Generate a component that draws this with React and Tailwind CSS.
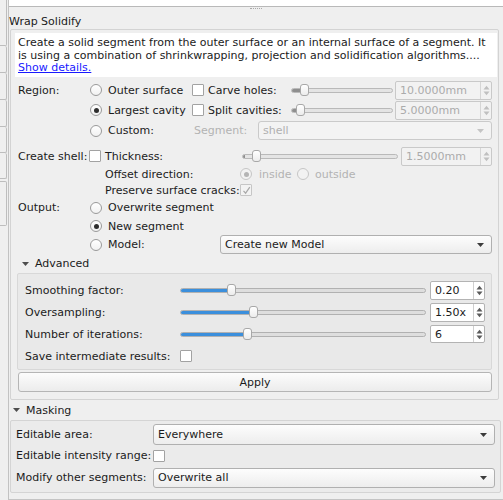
import React from 'react';

const Radio = ({ checked, disabled }) => (
  <span
    className={`w-[12px] h-[12px] rounded-full border shrink-0 flex items-center justify-center ${
      disabled ? 'border-[#c6c6c6] bg-[#f2f2f2]' : 'border-[#9a9a9a] bg-gradient-to-b from-white to-[#f1f1f1]'
    }`}
  >
    {checked && <span className={`w-[5px] h-[5px] rounded-full ${disabled ? 'bg-[#b4b4b4]' : 'bg-[#2e2e2e]'}`} />}
  </span>
);

const Check = ({ checked, disabled }) => (
  <span
    className={`w-[12px] h-[12px] border rounded-[1px] shrink-0 flex items-center justify-center ${
      disabled ? 'border-[#c6c6c6] bg-[#f3f3f3]' : 'border-[#a2a2a2] bg-white'
    }`}
  >
    {checked && (
      <svg width="9" height="9" viewBox="0 0 9 9">
        <path d="M1.5 4.8 L3.6 7.2 L7.8 1.2" fill="none" stroke="#a9a9a9" strokeWidth="1.2" />
      </svg>
    )}
  </span>
);

const Arrows = ({ disabled }) => (
  <svg width="7" height="11" viewBox="0 0 7 11">
    <path d="M0.5 4.5 L3.5 0.8 L6.5 4.5 Z" fill={disabled ? '#c0c0c0' : '#5a5a5a'} />
    <path d="M0.5 6.5 L3.5 10.2 L6.5 6.5 Z" fill={disabled ? '#c0c0c0' : '#5a5a5a'} />
  </svg>
);

const Spin = ({ value, disabled, w, h = 'h-[19px]' }) => (
  <div
    className={`${w} ${h} shrink-0 flex border rounded-[2px] ${
      disabled ? 'border-[#c9c9c9] bg-[#f2f2f2] text-[#ababab]' : 'border-[#b3b3b3] bg-white text-[#1b1b1b]'
    }`}
  >
    <div className="flex-1 flex items-center pl-[4px]">{value}</div>
    <div className={`w-[11px] border-l flex items-center justify-center ${disabled ? 'border-[#d6d6d6]' : 'border-[#cfcfcf]'}`}>
      <Arrows disabled={disabled} />
    </div>
  </div>
);

const Combo = ({ value, disabled, w, h = 'h-[19px]' }) => (
  <div
    className={`${w} ${h} shrink-0 flex items-center border rounded-[3px] pl-[4px] pr-[7px] ${
      disabled
        ? 'border-[#cacaca] bg-[#f3f3f3] text-[#b0b0b0]'
        : 'border-[#b0b0b0] bg-gradient-to-b from-[#fdfdfd] to-[#ededed] text-[#1b1b1b]'
    }`}
  >
    <span className="flex-1">{value}</span>
    <svg width="7" height="4" viewBox="0 0 7 4">
      <path d="M0 0 L7 0 L3.5 4 Z" fill={disabled ? '#c4c4c4' : '#3c3c3c'} />
    </svg>
  </div>
);

const Slider = ({ w, fill, knob, disabled }) => (
  <div className={`${w} h-[14px] shrink-0 relative flex items-center`}>
    <div
      className={`w-full h-[5px] rounded-[3px] border flex ${
        disabled ? 'border-[#b9b9b9] bg-[#e4e4e4]' : 'border-[#b1b1b1] bg-[#dedede]'
      }`}
    >
      <div className={`${fill} h-full rounded-l-[3px] ${disabled ? 'bg-[#8e8e8e]' : 'bg-[#3b8fdc]'}`} />
    </div>
    <div
      className={`absolute ${knob} top-[1px] w-[9px] h-[12px] rounded-[3px] border border-[#a8a8a8] bg-gradient-to-b from-white to-[#ececec]`}
    />
  </div>
);

const Tri = () => (
  <svg width="7" height="4" viewBox="0 0 7 4">
    <path d="M0 0 L7 0 L3.5 4 Z" fill="#4e4e4e" />
  </svg>
);

export default function App() {
  return (
    <div className="w-[503px] h-[500px] overflow-hidden flex bg-[#efefef] text-[11px] leading-[13px] text-[#1b1b1b] font-['DejaVu_Sans',sans-serif]">
      <div className="w-[9px] shrink-0 flex flex-col border-r border-[#c2c2c2]">
        <div className="w-[7px] h-[46px] border-r border-b border-[#bdbdbd] rounded-br-[2px]" />
        <div className="w-[7px] h-[27px] border-r border-b border-[#bdbdbd] rounded-r-[2px]" />
        <div className="w-[7px] h-[27px] border-r border-b border-[#bdbdbd] rounded-r-[2px]" />
        <div className="w-[7px] h-[27px] border-r border-b border-[#bdbdbd] rounded-r-[2px]" />
        <div className="w-[7px] h-[26px] border-r border-b border-[#bdbdbd] rounded-r-[2px]" />
        <div className="w-[7px] h-[26px] border-r border-b border-[#bdbdbd] rounded-r-[2px]" />
        <div className="w-[7px] h-[45px] mt-[2px] border-r border-t border-b border-[#bdbdbd] rounded-r-[2px]" />
      </div>

      <div className="flex-1 flex flex-col">
        <div className="h-[7px] bg-white border-b border-[#b9b9b9]" />
        <div className="h-[6px] flex justify-center pt-[1px]">
          <div className="w-[12px] h-[1px] border-t border-dotted border-[#a9a9a9]" />
        </div>
        <div className="h-[16px] flex items-center pl-[0px]">Wrap Solidify</div>

        <div className="ml-[1px] w-[489px] border border-[#d3d3d3] rounded-[2px] flex flex-col">
          <div className="ml-[4px] mt-[3px] w-[482px] h-[44px] bg-white pt-[4px] pl-[3px] leading-[12.5px]">
            <div>Create a solid segment from the outer surface or an internal surface of a segment. It</div>
            <div>is using a combination of shrinkwrapping, projection and solidification algorithms....</div>
            <div className="text-[#1a1aff] underline">Show details.</div>
          </div>

          <div className="mt-[3px] pl-[7px] flex flex-col">
            <div className="h-[20px] flex items-center">
              <span className="w-[72px] shrink-0">Region:</span>
              <span className="w-[102px] shrink-0 flex items-center gap-[6px]"><Radio />Outer surface</span>
              <span className="w-[99px] shrink-0 flex items-center gap-[4px]"><Check />Carve holes:</span>
              <Slider w="w-[102px]" fill="w-[12px]" knob="left-[9px]" disabled />
              <span className="w-[2px]" />
              <Spin value="10.0000mm" w="w-[97px]" disabled />
            </div>
            <div className="h-[20px] flex items-center">
              <span className="w-[72px] shrink-0" />
              <span className="w-[102px] shrink-0 flex items-center gap-[6px]"><Radio checked />Largest cavity</span>
              <span className="w-[99px] shrink-0 flex items-center gap-[4px]"><Check />Split cavities:</span>
              <Slider w="w-[102px]" fill="w-[7px]" knob="left-[5px]" disabled />
              <span className="w-[2px]" />
              <Spin value="5.0000mm" w="w-[97px]" disabled />
            </div>
            <div className="h-[21px] flex items-center">
              <span className="w-[72px] shrink-0" />
              <span className="w-[102px] shrink-0 flex items-center gap-[6px]"><Radio />Custom:</span>
              <span className="w-[66px] shrink-0 pl-[2px] text-[#b3b3b3]">Segment:</span>
              <Combo value="shell" w="w-[234px]" disabled />
            </div>

            <div className="mt-[5px] h-[20px] flex items-center">
              <span className="w-[71px] shrink-0">Create shell:</span>
              <Check />
              <span className="w-[141px] shrink-0 pl-[4px]">Thickness:</span>
              <Slider w="w-[156px]" fill="w-[2px]" knob="left-[10px]" disabled />
              <span className="w-[3px]" />
              <Spin value="1.5000mm" w="w-[91px]" disabled />
            </div>
            <div className="h-[16px] flex items-center">
              <span className="w-[87px] shrink-0" />
              <span className="w-[135px] shrink-0">Offset direction:</span>
              <span className="w-[57px] shrink-0 flex items-center gap-[7px] text-[#b3b3b3]"><Radio checked disabled />inside</span>
              <span className="flex items-center gap-[6px] text-[#b3b3b3]"><Radio disabled />outside</span>
            </div>
            <div className="h-[16px] flex items-center">
              <span className="w-[87px] shrink-0" />
              <span className="w-[135px] shrink-0">Preserve surface cracks:</span>
              <Check checked disabled />
            </div>

            <div className="h-[19px] flex items-center">
              <span className="w-[72px] shrink-0">Output:</span>
              <span className="flex items-center gap-[6px]"><Radio />Overwrite segment</span>
            </div>
            <div className="h-[18px] flex items-center">
              <span className="w-[72px] shrink-0" />
              <span className="flex items-center gap-[6px]"><Radio checked />New segment</span>
            </div>
            <div className="h-[19px] flex items-center">
              <span className="w-[72px] shrink-0" />
              <span className="w-[130px] shrink-0 flex items-center gap-[6px]"><Radio />Model:</span>
              <Combo value="Create new Model" w="w-[272px]" />
            </div>
          </div>

          <div className="h-[19px] flex items-center pl-[11px] gap-[6px]">
            <Tri />
            <span>Advanced</span>
          </div>

          <div className="ml-[6px] w-[475px] border border-[#d8d8d8] rounded-[2px] bg-[#e9e9e9] pt-[5px] pb-[2px] pl-[7px] flex flex-col">
            <div className="h-[22px] flex items-center">
              <span className="w-[155px] shrink-0">Smoothing factor:</span>
              <Slider w="w-[246px]" fill="w-[50px]" knob="left-[47px]" />
              <span className="w-[4px]" />
              <Spin value="0.20" w="w-[55px]" />
            </div>
            <div className="h-[22px] flex items-center">
              <span className="w-[155px] shrink-0">Oversampling:</span>
              <Slider w="w-[246px]" fill="w-[72px]" knob="left-[69px]" />
              <span className="w-[4px]" />
              <Spin value="1.50x" w="w-[55px]" />
            </div>
            <div className="h-[22px] flex items-center">
              <span className="w-[155px] shrink-0">Number of iterations:</span>
              <Slider w="w-[246px]" fill="w-[66px]" knob="left-[63px]" />
              <span className="w-[4px]" />
              <Spin value="6" w="w-[55px]" h="h-[18px]" />
            </div>
            <div className="h-[22px] flex items-center">
              <span className="w-[155px] shrink-0">Save intermediate results:</span>
              <Check />
            </div>
          </div>

          <div className="ml-[7px] mt-[2px] mb-[7px] w-[474px] h-[20px] border border-[#b5b5b5] rounded-[3px] bg-gradient-to-b from-[#fcfcfc] to-[#ececec] flex items-center justify-center">
            Apply
          </div>
        </div>

        <div className="h-[20px] flex items-center pl-[4px] gap-[6px]">
          <Tri />
          <span>Masking</span>
        </div>

        <div className="ml-[1px] w-[491px] border border-[#d4d4d4] rounded-[2px] bg-[#ebebeb] pt-[3px] pb-[4px] pl-[5px] flex flex-col">
          <div className="h-[21px] flex items-center">
            <span className="w-[137px] shrink-0">Editable area:</span>
            <Combo value="Everywhere" w="w-[342px]" h="h-[21px]" />
          </div>
          <div className="h-[21px] flex items-center">
            <span className="w-[137px] shrink-0">Editable intensity range:</span>
            <Check />
          </div>
          <div className="mt-[1px] h-[21px] flex items-center">
            <span className="w-[137px] shrink-0">Modify other segments:</span>
            <Combo value="Overwrite all" w="w-[342px]" h="h-[20px]" />
          </div>
        </div>
        <div className="mt-[6px] h-[1px] bg-[#c4c4c4]" />
      </div>
    </div>
  );
}
